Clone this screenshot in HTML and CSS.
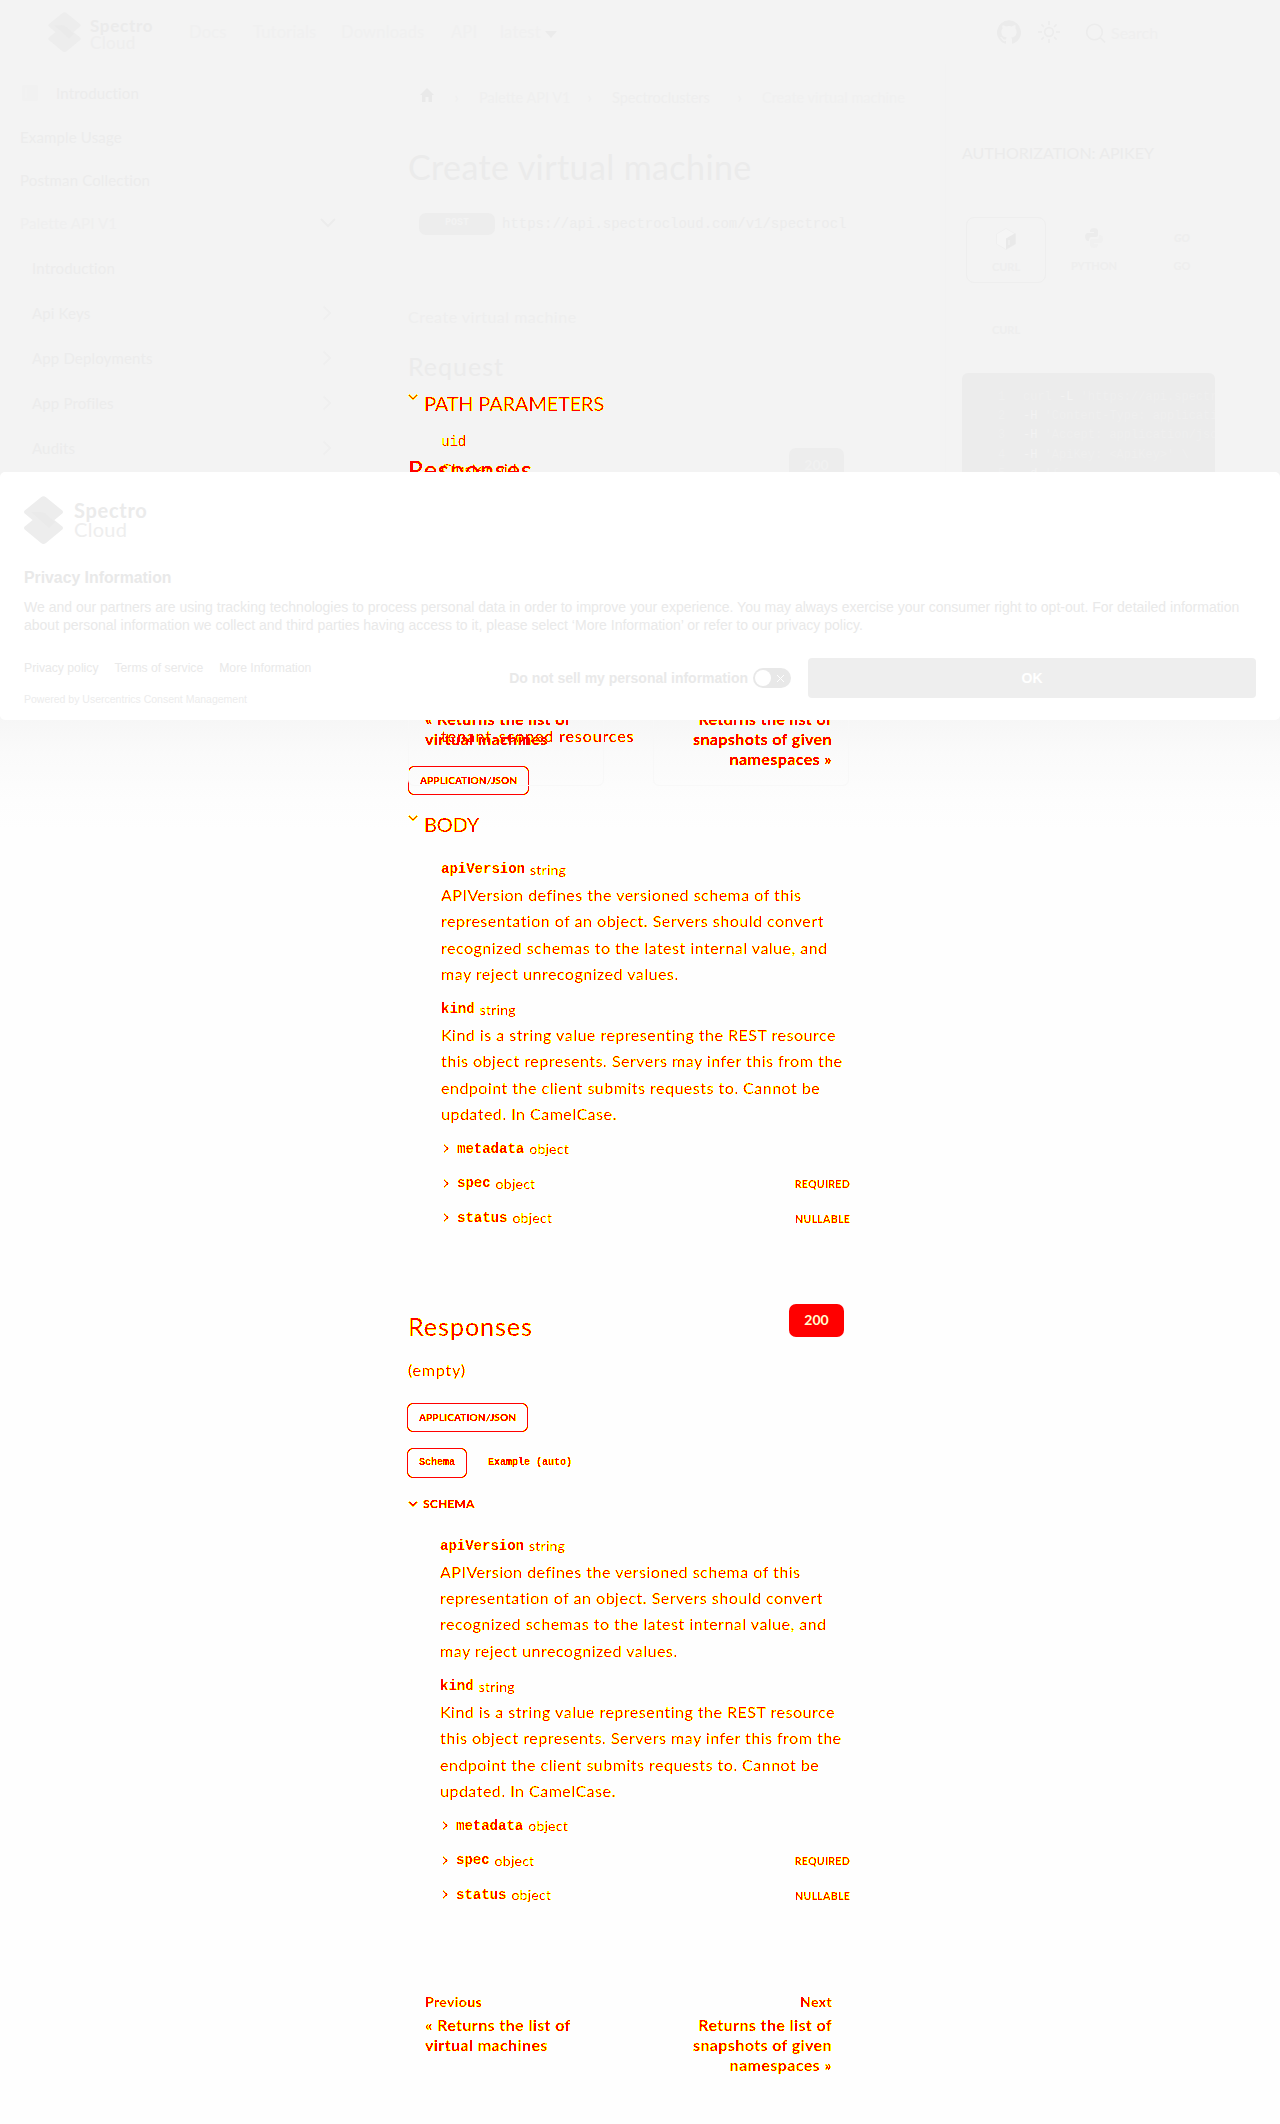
FILE: index.html
```html
<!DOCTYPE html>
<html lang="en">
<head>
<meta charset="utf-8">
<title>Create virtual machine</title>
<link rel="stylesheet" href="styles.css">
</head>
<body>
<svg class="defs" width="0" height="0">
  <defs>
    <filter id="edges" x="-5%" y="-10%" width="110%" height="120%" color-interpolation-filters="sRGB">
      <feColorMatrix values="0 0 0 0 1  0 0 0 -1 1  0 0 0 0 0  0 0 0 1 0"/>
      <feComponentTransfer>
        <feFuncG type="discrete" tableValues="0 1"/>
        <feFuncA type="discrete" tableValues="0 1 1 1 1 1 1 1"/>
      </feComponentTransfer>
    </filter>
    <filter id="edges-light" x="-5%" y="-10%" width="110%" height="120%" color-interpolation-filters="sRGB">
      <feColorMatrix values="0 0 0 0 1  0 0 0 -1 1  0 0 0 0 0  0 0 0 1 0"/>
      <feComponentTransfer>
        <feFuncG type="discrete" tableValues="0 1 1 1"/>
        <feFuncA type="discrete" tableValues="0 1 1 1 1 1"/>
      </feComponentTransfer>
    </filter>
    <symbol id="mark" viewBox="0 0 39 48">
      <path d="M17 1.300Q19.500-.8 22 1.300L38 14.300Q40 16 38 17.800L22 31Q19.500 33 17 31L1 17.800Q-1 16 1 14.300Z" fill="#ededed"/>
      <path d="M17 17.300Q19.500 15 22 17.300L38 30.300Q40 32 38 33.800L22 47Q19.500 49 17 47L1 33.800Q-1 32 1 30.300Z" fill="#ededed"/>
      <path d="M7 16H16Q20 16 23 19L31 26L25 32Z" fill="#eaeaea"/>
    </symbol>
    <symbol id="right" viewBox="0 0 10 16"><path d="M1.500 1.500L8 8L1.500 14.500" fill="none" stroke="#efefef" stroke-width="2"/></symbol>
    <symbol id="sm-right" viewBox="0 0 8 9"><path d="M2 .8L6 4.500L2 8.200" fill="none" stroke="red" stroke-width="1.200"/></symbol>
    <symbol id="sm-down" viewBox="0 0 10 6"><path d="M1 .8L5 4.800L9 .8" fill="none" stroke="red" stroke-width="1.300"/></symbol>
  </defs>
</svg>

<header class="navbar">
  <div class="brand"><svg class="brand-mark" width="33" height="40"><use href="#mark"/></svg><div class="brand-name"><b>Spectro</b><span>Cloud</span></div></div>
  <nav class="links"><a class="n1">Docs</a><a class="n2">Tutorials</a><a class="n3">Downloads</a><a class="n4">API</a><a class="n5">latest <i class="caret"></i></a></nav>
  <div class="tools">
    <svg class="gh" width="24" height="24" viewBox="0 0 24 24"><path fill="#ebebeb" d="M12 .3a12 12 0 0 0-3.800 23.400c.6.1.8-.3.8-.6v-2c-3.300.7-4-1.600-4-1.600-.6-1.400-1.400-1.800-1.400-1.800-1-.7.1-.7.1-.7 1.200 0 1.900 1.200 1.900 1.200 1 1.800 2.800 1.300 3.500 1 0-.8.4-1.300.7-1.600-2.700-.3-5.500-1.300-5.500-6 0-1.200.5-2.300 1.300-3.100-.2-.4-.6-1.600 0-3.200 0 0 1-.3 3.400 1.200a11.500 11.500 0 0 1 6 0c2.300-1.500 3.300-1.200 3.300-1.200.6 1.600.2 2.800 0 3.200.9.8 1.300 1.900 1.300 3.200 0 4.600-2.800 5.600-5.500 5.900.5.400.9 1 .9 2.200v3.300c0 .3.100.7.8.6A12 12 0 0 0 12 .3"/></svg>
    <svg class="sun" width="22" height="22" viewBox="0 0 22 22"><g fill="none" stroke="#ececec" stroke-width="1.700"><circle cx="11" cy="11" r="4.300"/><path d="M11 0v4M11 18v4M0 11h4M18 11h4M3.400 3.400l2.400 2.400M16.200 16.200l2.400 2.400M3.400 18.600l2.400-2.400M16.200 5.800l2.400-2.400"/></g></svg>
    <svg class="mag" width="20" height="20" viewBox="0 0 20 20"><g fill="none" stroke="#ececec" stroke-width="1.600"><circle cx="8.500" cy="9" r="7.800"/><path d="M14 14.500l5 5"/></g></svg>
    <span class="search">Search</span>
  </div>
</header>

<div class="layout">
  <aside class="sidebar">
    <a class="top"><svg width="16" height="16"><rect width="16" height="16" rx="2" fill="#f1f1f1"/><path d="M4 3v10" stroke="#f3f3f3"/></svg><span>Introduction</span></a>
    <a>Example Usage</a>
    <a>Postman Collection</a>
    <a class="pale">Palette API V1<svg width="16" height="10" viewBox="0 0 16 10"><path d="M1 1l7 7 7-7" fill="none" stroke="#ececec" stroke-width="2"/></svg></a>
    <a class="sub">Introduction</a>
    <a class="sub">Api Keys<svg width="10" height="16"><use href="#right"/></svg></a>
    <a class="sub">App Deployments<svg width="10" height="16"><use href="#right"/></svg></a>
    <a class="sub">App Profiles<svg width="10" height="16"><use href="#right"/></svg></a>
    <a class="sub">Audits<svg width="10" height="16"><use href="#right"/></svg></a>
  </aside>

  <main class="main">
    <div class="crumbs">
      <svg width="14" height="14" viewBox="0 0 14 14"><path fill="#e9e9e9" d="M7 0l7 7h-2v7H8.500V9h-3v5H2V7H0z"/></svg>
      <i>›</i><span class="c1">Palette API V1</span><i>›</i><span class="c2">Spectroclusters</span><i>›</i><span class="c3">Create virtual machine</span>
    </div>
    <h1>Create virtual machine</h1>
    <div class="endpoint"><b>POST</b><code>https://api.spectrocloud.com/v1/spectrocl</code></div>
    <p class="desc">Create virtual machine</p>
    <h2 class="request">Request</h2>
    <h3 class="summary path hot-light"><svg width="10" height="6"><use href="#sm-down"/></svg>PATH PARAMETERS</h3>
    <code class="uid hot-light">uid</code>
    <p class="param hot-light">Cluster uid</p>
    <p class="scoped hot">tenant-scoped resources</p>
    <span class="mime hot">APPLICATION/JSON</span>
    <h3 class="summary hot-light"><svg width="10" height="6"><use href="#sm-down"/></svg>BODY</h3>
    <div class="fields">
      <div class="field hot-light"><code>apiVersion</code><span>string</span></div>
      <p class="hot-light">APIVersion defines the versioned schema of this<br>representation of an object. Servers should convert<br>recognized schemas to the latest internal value, and<br>may reject unrecognized values.</p>
      <div class="field kind hot-light"><code>kind</code><span>string</span></div>
      <p class="hot-light">Kind is a string value representing the REST resource<br>this object represents. Servers may infer this from the<br>endpoint the client submits requests to. Cannot be<br>updated. In CamelCase.</p>
      <div class="field obj hot-light"><svg width="8" height="9"><use href="#sm-right"/></svg><code>metadata</code><span>object</span></div>
      <div class="field obj hot-light"><svg width="8" height="9"><use href="#sm-right"/></svg><code>spec</code><span>object</span><em>REQUIRED</em></div>
      <div class="field obj hot-light"><svg width="8" height="9"><use href="#sm-right"/></svg><code>status</code><span>object</span><em>NULLABLE</em></div>
    </div>

    <div class="responses"><h2 class="hot-light">Responses</h2><b class="code"><span>200</span></b></div>
    <p class="empty hot-light">(empty)</p>
    <span class="mime hot second">APPLICATION/JSON</span>
    <div class="tabs hot"><span class="on">Schema</span><span>Example (auto)</span></div>
    <h4 class="schema hot"><svg width="10" height="6"><use href="#sm-down"/></svg>SCHEMA</h4>
    <div class="fields lower">
      <div class="field hot-light"><code>apiVersion</code><span>string</span></div>
      <p class="hot-light">APIVersion defines the versioned schema of this<br>representation of an object. Servers should convert<br>recognized schemas to the latest internal value, and<br>may reject unrecognized values.</p>
      <div class="field kind hot-light"><code>kind</code><span>string</span></div>
      <p class="hot-light">Kind is a string value representing the REST resource<br>this object represents. Servers may infer this from the<br>endpoint the client submits requests to. Cannot be<br>updated. In CamelCase.</p>
      <div class="field obj hot-light"><svg width="8" height="9"><use href="#sm-right"/></svg><code>metadata</code><span>object</span></div>
      <div class="field obj hot-light"><svg width="8" height="9"><use href="#sm-right"/></svg><code>spec</code><span>object</span><em>REQUIRED</em></div>
      <div class="field obj hot-light"><svg width="8" height="9"><use href="#sm-right"/></svg><code>status</code><span>object</span><em>NULLABLE</em></div>
    </div>
    <nav class="pager hot-light">
      <a><small>Previous</small>« Returns the list of<br>virtual machines</a>
      <a class="next"><small>Next</small>Returns the list of<br>snapshots of given<br>namespaces »</a>
    </nav>
  </main>

  <aside class="panel">
    <h5>AUTHORIZATION: APIKEY</h5>
    <div class="langs">
      <div class="lang active"><svg width="20" height="22" viewBox="0 0 20 22"><path d="M10 .5L19.500 6v10L10 21.500.5 16V6z" fill="#f5f5f5" stroke="#efefef"/><path d="M10 10.500L19.500 5v11L10 21.500z" fill="#e9e9e9"/><path d="M13 12v5" stroke="#f3f3f3"/></svg>CURL</div>
      <div class="lang"><svg width="18" height="20" viewBox="0 0 18 20"><path d="M5 3q0-3 4-3t4 3v4q0 2-2 2H6q-2 0-2 4H2q-2-2-2-4 0-4 3-4h6V4H5z" fill="#ececec"/><path d="M13 17q0 3-4 3t-4-3v-4q0-2 2-2h5q2 0 2-4h2q2 1 2 4 0 4-3 4H9v1h4z" fill="#f0f0f0"/></svg>PYTHON</div>
      <div class="lang"><span class="go">GO</span>GO</div>
    </div>
    <div class="variant">CURL</div>
    <pre class="code-block"><code><i>1</i>curl <b>-L</b> 'https://api.spectr
<i>2</i><b>-H</b> 'Content-Type: applicati
<i>3</i><b>-H</b> 'Accept: application/jso
<i>4</i><b>-H</b> 'ApiKey: &lt;ApiKey&gt;' \
<i>5</i><b>-d</b> '{</code></pre>
  </aside>
</div>

<div class="ghost">
  <h2 class="hot">Responses</h2>
  <b class="ghost-code">200</b>
</div>
<nav class="ghost-pager">
  <a><span class="hot">« Returns the list of<br>virtual machines</span></a>
  <a class="next"><span class="hot">Returns the list of<br>snapshots of given<br>namespaces »</span></a>
</nav>

<section class="consent">
  <div class="brand big"><svg class="brand-mark" width="39" height="48"><use href="#mark"/></svg><div class="brand-name"><b>Spectro</b><span>Cloud</span></div></div>
  <h6>Privacy Information</h6>
  <p>We and our partners are using tracking technologies to process personal data in order to improve your experience. You may always exercise your consumer right to opt-out. For detailed information about personal information we collect and third parties having access to it, please select ‘More Information’ or refer to our privacy policy.</p>
  <div class="consent-foot">
    <div class="legal"><div class="legal-links"><a>Privacy policy</a><a>Terms of service</a><a>More Information</a></div><div class="powered">Powered by Usercentrics Consent Management</div></div>
    <div class="choice"><b>Do not sell my personal information</b><span class="toggle"><i></i><svg width="9" height="9"><path d="M1 1l7 7M8 1l-7 7" stroke="#fff" fill="none"/></svg></span><button>OK</button></div>
  </div>
</section>
</body>
</html>
```
FILE: styles.css
```css
* { box-sizing: border-box; margin: 0; padding: 0; }
body {
  position: relative;
  width: 1280px;
  height: 2124px;
  overflow: hidden;
  font-family: Lato, sans-serif;
  font-size: 16px;
  color: #ececec;
  background: linear-gradient(#f3f3f3 0, #f3f3f3 600px, #f6f6f6 715px, #fafafa 752px, #fdfdfd 800px, #fefefe 830px);
}
code, pre { font-family: "Liberation Mono", monospace; }
i, em { font-style: normal; }
svg { flex: none; display: block; }
.defs { position: absolute; }
.hot { color: red; filter: url(#edges); }
.hot-light { color: red; filter: url(#edges-light); }

.navbar { display: flex; height: 64px; padding-left: 48px; }
.brand { display: flex; width: 141px; padding-top: 12px; }
.brand-name { padding: 5px 0 0 9px; font-size: 17px; line-height: 17px; }
.brand-name b, .brand-name span { display: block; color: #ebebeb; }
.brand-name b { letter-spacing: .7px; }
.brand-name span { color: #eeeeee; font-weight: 400; letter-spacing: .3px; }
.links { display: flex; flex: 1; line-height: 64px; color: #f0f0f0; font-size: 16.500px; letter-spacing: .2px; }
.n1 { width: 64px; } .n2 { width: 88px; } .n3 { width: 110px; } .n4 { width: 49px; }
.caret { display: inline-block; border: 6px solid transparent; border-top: 7px solid #ebebeb; border-bottom: 0; }
.tools { display: flex; align-items: center; width: 283px; }
.sun { margin-left: 17px; }
.mag { margin: 1px 0 0 26px; }
.search { margin-left: 5px; color: #efefef; }

.layout { display: grid; grid-template-columns: 408px 537px 335px; }
.sidebar { padding-top: 7px; }
.sidebar a { display: flex; align-items: center; justify-content: space-between; height: 45px; padding: 0 72px 0 20px; font-size: 15px; letter-spacing: .15px; color: #ececec; }
.sidebar a.top { justify-content: flex-start; gap: 18px; height: 44px; padding-left: 22px; }
.sidebar a.top + a, .sidebar a.top + a + a { height: 43px; }
.sidebar a.pale { color: #efefef; height: 44px; }
.sidebar a.sub { height: 45.200px; padding: 0 76px 0 32px; }

.main { width: 441px; padding-top: 17px; }
.crumbs { display: flex; align-items: center; height: 32px; padding-left: 12px; font-size: 14.500px; white-space: nowrap; color: #efefef; }
.crumbs > * { flex: none; }
.crumbs svg { margin-bottom: 4px; }
.crumbs i { width: 45px; text-align: center; }
.c1 { width: 88px; } .c2 { width: 105px; color: #eeeeee; }
.c3 { color: #f0f0f0; }
h1 { margin-top: 30px; height: 48px; line-height: 48px; font-size: 34px; font-weight: 400; letter-spacing: .4px; color: #ebebeb; }
.endpoint { display: flex; align-items: center; margin: 22px 0 0 11px; height: 22px; white-space: nowrap; font-size: 14px; }
.endpoint b { width: 76px; height: 22px; margin-right: 7px; border-radius: 7px; background: #ededed; color: #f3f3f3; text-align: center; font: bold 10px/20px "Liberation Mono", monospace; }
.desc { margin-top: 69px; line-height: 26px; color: #eeeeee; letter-spacing: .5px; }
h2 { font-size: 25px; font-weight: 400; line-height: 32px; letter-spacing: 1px; }
.request { margin-top: 20px; color: #ebebeb; }
.summary { display: flex; gap: 6px; line-height: 28px; margin-top: 15px; height: 28px; font-size: 20px; font-weight: 400; letter-spacing: -.2px; }
.summary svg { margin-top: 5px; }
.path { margin-top: 7px; }
.uid { display: block; margin: 15px 0 0 33px; line-height: 20px; font-size: 14px; }
.param { margin: 4px 0 0 33px; line-height: 26px; }
.scoped { margin: 241px 0 17px 33px; line-height: 26px; letter-spacing: .9px; }
.mime { display: block; width: 121px; height: 29px; border: 1px solid red; border-radius: 6px; text-align: center; font-size: 10px; line-height: 27px; font-weight: 700; letter-spacing: .15px; }
.fields { margin-top: 20px; padding-left: 33px; }
.fields p { margin-top: 2px; line-height: 26.300px; white-space: nowrap; letter-spacing: .5px; }
.field { display: flex; align-items: center; height: 22px; font-size: 14px; }
.field code { margin-right: 5px; font-weight: 700; font-size: 14px; line-height: 20px; }
.field span { font-weight: 400; letter-spacing: .25px; }
.field em { margin: 2px -1px 0 auto; font-size: 10.500px; font-weight: 700; letter-spacing: .3px; }
.kind { margin-top: 11px; }
.obj { margin-top: 10.500px; }
.obj + .obj { margin-top: 12.500px; }
.obj svg { margin: 0 7px 0 1px; }

.responses { display: flex; justify-content: space-between; margin-top: 75px; height: 40px; padding-right: 5px; }
.responses h2 { margin-top: 6px; }
.code { width: 55px; height: 33px; border-radius: 7px; background: red; color: #ffffd0; font-size: 14px; line-height: 31px; text-align: center; }
.empty { margin: 13px 0 20px; line-height: 26px; letter-spacing: .8px; }
.second { margin-left: -1px; }
.tabs { display: flex; align-items: center; gap: 21px; margin: 16px 0 0 -1px; font: bold 10px "Liberation Mono", monospace; }
.tabs .on { width: 60px; height: 30px; line-height: 28px; text-align: center; border: 1px solid red; border-radius: 6px; }
.schema { display: flex; align-items: center; gap: 5px; height: 20px; margin-top: 16px; font-size: 12px; letter-spacing: .2px; }
.lower { margin-top: 21px; padding-left: 32px; }
.pager { display: flex; justify-content: space-between; margin-top: 86px; padding: 0 17px; line-height: 20px; font-weight: 700; font-size: 16px; letter-spacing: .4px; }
.pager small { display: block; height: 23px; font-size: 14px; line-height: 20px; }
.next { text-align: right; }

.panel { padding: 79px 65px 0 16px; overflow: hidden; border-left: 1px solid #f2f2f2; height: 656px; }
h5 { line-height: 20px; font-size: 16px; font-weight: 400; white-space: nowrap; color: #ebebeb; }
.langs { display: flex; margin: 54px -30px 0 4px; color: #eeeeee; }
.lang { display: flex; flex-direction: column; align-items: center; flex: none; width: 80px; height: 66px; padding-top: 10px; margin-right: 8px; font-size: 11px; font-weight: 700; gap: 10px; line-height: 14px; }
.lang svg, .go { height: 22px; }
.go { font-weight: 900; font-style: italic; line-height: 22px; }
.lang.active { border: 1px solid #eeeeee; border-radius: 8px; }
.variant { width: 80px; margin: 39px 0 0 4px; text-align: center; font-size: 11px; line-height: 16px; font-weight: 700; color: #eeeeee; }
.code-block { margin-top: 35px; width: 253px; height: 140px; overflow: hidden; border-radius: 6px; background: #ececec; color: #efefef; padding: 15px 0 0 36px; font-size: 12px; line-height: 19.200px; }
.code-block code { font-size: 12px; }
.code-block i { display: inline-block; width: 25px; }
.code-block b { font-weight: 400; color: #f3f3f3; }

.ghost { position: absolute; left: 408px; top: 448px; width: 436px; display: flex; justify-content: space-between; }
.ghost h2 { margin-top: 5px; }
.ghost-code { width: 55px; height: 33px; border-radius: 7px; background: #ededed; color: #f1f1f1; font-size: 14px; line-height: 33px; text-align: center; }
.ghost-pager { position: absolute; left: 408px; top: 669px; width: 441px; height: 117px; display: flex; justify-content: space-between; font-weight: 700; line-height: 20px; letter-spacing: .4px; }
.ghost-pager a { width: 196px; padding: 39px 16px 0; border: 1px solid #f8f8f8; border-radius: 6px; white-space: nowrap; }
.ghost-pager span { display: block; }

.consent { position: absolute; left: 0; top: 472px; width: 1280px; height: 248px; padding: 24px 24px 0; border-radius: 5px; background: #fff; font-family: "Liberation Sans", Arial, sans-serif; color: #e9e9e9; }
.big { padding: 0; font-family: Lato, sans-serif; }
.big .brand-name { padding: 5px 0 0 11px; font-size: 20px; line-height: 19px; }
.consent h6 { margin-top: 24px; font-size: 15.800px; line-height: 20px; }
.consent p { margin-top: 10px; font-size: 14px; line-height: 18px; }
.consent-foot { display: flex; justify-content: space-between; margin-top: 24px; }
.legal { padding-top: 1px; font-size: 12.200px; line-height: 18px; }
.legal-links { display: flex; gap: 16px; }
.powered { margin-top: 13px; font-size: 10.500px; color: #ececec; }
.choice { display: flex; align-items: center; height: 40px; font-size: 14px; }
.toggle { display: flex; align-items: center; justify-content: space-between; width: 38px; height: 20px; margin: 0 17px 0 5px; padding: 0 6px 0 2px; border-radius: 10px; background: #e8e8e8; }
.toggle i { width: 16px; height: 16px; border-radius: 50%; background: #fff; }
.choice button { width: 448px; height: 40px; border: 0; border-radius: 4px; background: #eeeeee; color: #fff; font: bold 14px "Liberation Sans", Arial, sans-serif; }
```
